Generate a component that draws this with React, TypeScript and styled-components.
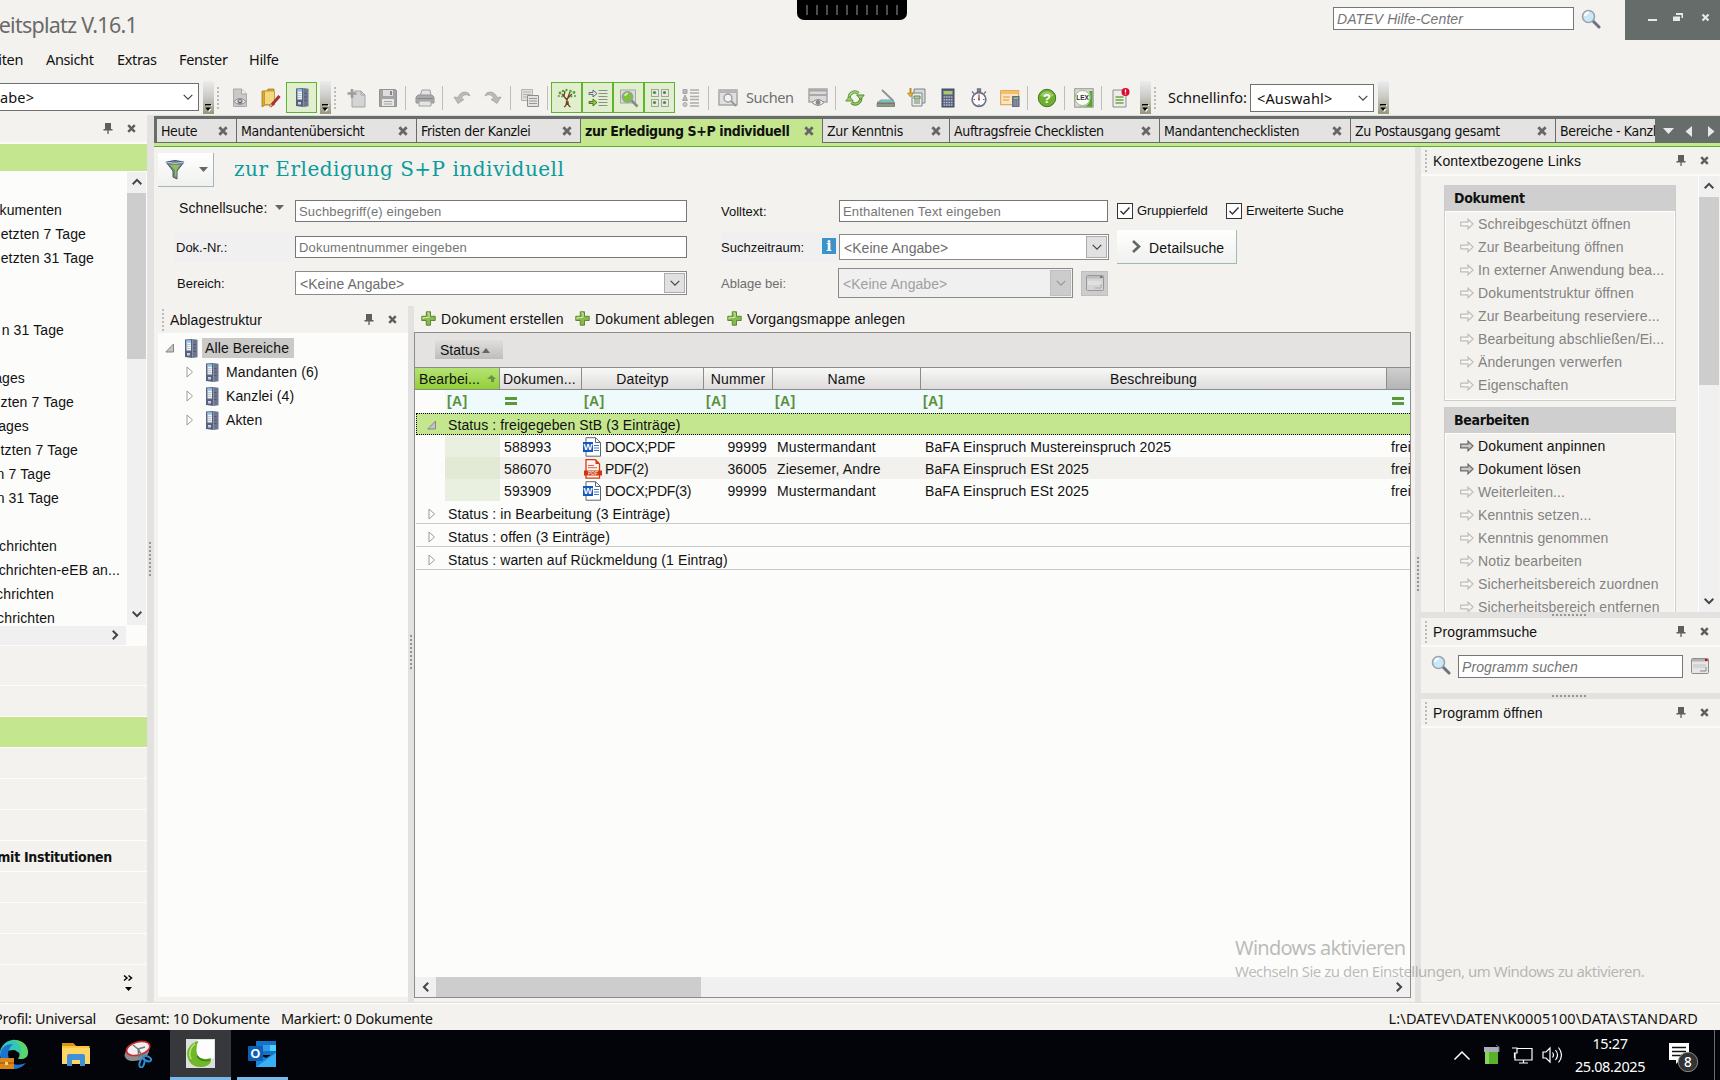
import React from 'react';
import styled, { createGlobalStyle, css } from 'styled-components';

const sans = '"Liberation Sans", Arial, sans-serif';
const segoe = '"Noto Sans", "Open Sans", sans-serif';
const tahoma = '"DejaVu Sans Condensed", "DejaVu Sans", sans-serif';
const BG = '#f3f2ee';
const PAPER = '#fcfcfa';
const GREEN = '#c3e68e';
const SPLIT = '#e3e2e0';

const Global = createGlobalStyle`
  * { box-sizing: border-box; }
  body { margin: 0; overflow: hidden; background: ${BG}; }
  svg { display: block; flex: none; }
`;

const Screen = styled.div`
  position: relative;
  width: 1720px;
  height: 1080px;
  display: flex;
  flex-direction: column;
  overflow: hidden;
  background: ${BG};
  color: #111;
  font: 14px ${sans};
  letter-spacing: 0.12px;
  white-space: nowrap;
`;

/* ---------- title, menu ---------- */
const TitleBar = styled.header`
  height: 40px;
  display: flex;
  align-items: flex-start;
`;
const AppTitle = styled.div`
  width: 137px;
  height: 40px;
  display: flex;
  justify-content: flex-end;
  padding-top: 4px;
  margin-right: 1196px;
  font: 21.5px/42px ${segoe};
  letter-spacing: -0.75px;
  color: #6a6a6a;
`;
const TextField = styled.div<{ $w: number; $h?: number; $italic?: boolean }>`
  width: ${p => p.$w}px;
  height: ${p => p.$h ?? 22}px;
  flex: none;
  display: flex;
  align-items: center;
  padding: 1px 0 0 3px;
  border: 1px solid #767676;
  background: #fff;
  color: #757575;
  font-size: 13px;
  letter-spacing: 0.17px;
  ${p => p.$italic && css`font-size: 14px; font-style: italic; letter-spacing: 0.1px;`}
`;
const HelpSearch = styled.div`
  display: flex;
  align-items: center;
  gap: 7px;
  padding-top: 7px;
  width: 292px;
`;
const WindowButtons = styled.div`
  width: 95px;
  height: 40px;
  background: #666c69;
`;
const RemotePill = styled.div`
  position: absolute;
  left: 797px;
  top: 0;
  width: 110px;
  height: 20px;
  padding: 5px 9px 0;
  display: flex;
  justify-content: space-between;
  background: #000;
  border-radius: 0 0 7px 7px;
`;
const Tick = styled.i`
  width: 2px;
  height: 10px;
  background: #4c4c4c;
`;
const MenuBar = styled.nav`
  height: 40px;
  display: flex;
  align-items: center;
  padding-bottom: 2px;
  font: 14.5px ${segoe};
  letter-spacing: -0.35px;
`;
const MenuItem = styled.span<{ $w: number; $right?: boolean }>`
  width: ${p => p.$w}px;
  display: flex;
  justify-content: ${p => (p.$right ? 'flex-end' : 'flex-start')};
  margin-right: ${p => (p.$right ? 23 : 0)}px;
`;

/* ---------- toolbar ---------- */
const ToolBar = styled.div`
  height: 35px;
  display: flex;
  align-items: center;
  font: 14.5px ${segoe};
`;
const ToolCombo = styled.div<{ $w: number; $open?: boolean; $top: number }>`
  width: ${p => p.$w}px;
  height: 28px;
  flex: none;
  display: flex;
  align-items: center;
  justify-content: space-between;
  padding: 0 5px 1px ${p => (p.$open ? 0 : 6)}px;
  margin-top: ${p => p.$top}px;
  border: 1px solid #707070;
  border-left-width: ${p => (p.$open ? 0 : 1)}px;
  background: #fff;
  letter-spacing: 0.15px;
`;
const Overflow = styled.div<{ $ml: number }>`
  width: 11px;
  height: 33px;
  flex: none;
  margin-left: ${p => p.$ml}px;
  display: flex;
  align-items: flex-end;
  justify-content: center;
  padding-bottom: 2px;
  background: linear-gradient(#ececee, #c9c9c4 50%, #97967b);
`;
const Grip = styled.i<{ $ml?: number; $mr?: number; $h?: number }>`
  width: 2px;
  height: ${p => p.$h ?? 22}px;
  flex: none;
  margin: 0 ${p => p.$mr ?? 0}px 0 ${p => p.$ml ?? 0}px;
  background: repeating-linear-gradient(#bcbcba 0 2px, transparent 2px 4px);
`;
const Slot = styled.div<{ $on?: boolean; $w?: number }>`
  width: ${p => p.$w ?? 31}px;
  height: 31px;
  flex: none;
  display: flex;
  align-items: center;
  justify-content: center;
  ${p => p.$on && css`background: #e1efcf; border: 1px solid #5db42d;`}
`;
const Sep = styled.i`
  width: 1px;
  height: 24px;
  flex: none;
  margin: 0 3px 0 2px;
  background: #bdbdbb;
`;
const ToolText = styled.span<{ $w: number; $c?: string; $ml: number }>`
  width: ${p => p.$w}px;
  margin-left: ${p => p.$ml}px;
  padding-bottom: 1px;
  flex: none;
  color: ${p => p.$c ?? '#111'};
  letter-spacing: ${p => (p.$c ? -0.4 : 0)}px;
`;

/* ---------- body ---------- */
const Body = styled.div`
  height: 888px;
  display: flex;
`;
const NavPane = styled.aside`
  width: 147px;
  flex: none;
  display: flex;
  flex-direction: column;
`;
const PaneHead = styled.div<{ $h: number; $line?: boolean }>`
  height: ${p => p.$h}px;
  flex: none;
  display: flex;
  align-items: center;
  padding-left: 4px;
  border-bottom: ${p => (p.$line ? '2px solid #fbfbfa' : '0')};
`;
const HeadTitle = styled.span`
  flex: 1;
  padding-left: 6px;
`;
const HeadTools = styled.span<{ $mr: number }>`
  display: flex;
  align-items: center;
  gap: 14px;
  margin-right: ${p => p.$mr}px;
`;
const NavGreen = styled.div`
  height: 28px;
  flex: none;
  background: ${GREEN};
  border-bottom: 1px solid ${PAPER};
`;
const NavBody = styled.div`
  height: 453px;
  flex: none;
  display: flex;
  background: ${PAPER};
`;
const NavList = styled.div`
  width: 127px;
  height: 453px;
  overflow: hidden;
  padding-top: 1px;
`;
const NavRow = styled.div<{ $end: number }>`
  width: ${p => p.$end}px;
  height: 24px;
  display: flex;
  align-items: center;
  justify-content: flex-end;
  padding-top: 1px;
`;
const VScroll = styled.div<{ $w: number }>`
  width: ${p => p.$w}px;
  flex: none;
  display: flex;
  flex-direction: column;
  align-items: stretch;
  background: #f0f0f0;
`;
const ScrollBtn = styled.div<{ $h?: number; $w?: number }>`
  height: ${p => p.$h ?? 20}px;
  width: ${p => (p.$w ? `${p.$w}px` : 'auto')};
  flex: none;
  display: flex;
  align-items: center;
  justify-content: center;
  padding-bottom: 1px;
`;
const VThumb = styled.div<{ $h: number }>`
  height: ${p => p.$h}px;
  background: #cdcdcd;
`;
const Spacer = styled.div`
  flex: 1;
`;
const NavHScroll = styled.div`
  height: 21px;
  flex: none;
  width: 147px;
  display: flex;
  justify-content: flex-end;
  padding: 0 21px 1px 0;
  background: linear-gradient(90deg, #f0f0f0 126px, ${PAPER} 126px);
  border: solid ${PAPER};
  border-width: 1px 0;
`;
const NavGroup = styled.div<{ $h: number; $on?: boolean }>`
  height: ${p => p.$h}px;
  flex: none;
  display: flex;
  align-items: center;
  justify-content: flex-end;
  padding: 2px 35px 0 0;
  border-bottom: 1px solid #fdfdfc;
  background: ${p => (p.$on ? GREEN : 'transparent')};
  font: bold 14px ${tahoma};
  letter-spacing: -0.3px;
`;
const NavFoot = styled.div`
  flex: 1;
  display: flex;
  justify-content: flex-end;
  padding: 9px 13px 0 0;
`;
const Splitter = styled.div<{ $w: number; $pt: number }>`
  width: ${p => p.$w}px;
  flex: none;
  padding: ${p => p.$pt}px 0 0 2px;
  background: ${SPLIT};
`;
const SplitDots = styled.i`
  display: block;
  width: 2px;
  height: 35px;
  background: repeating-linear-gradient(#959595 0 2px, transparent 2px 4px);
`;
const HSplitter = styled.div`
  height: 6px;
  flex: none;
  display: flex;
  align-items: center;
  padding-left: 131px;
  background: ${SPLIT};
`;
const HSplitDots = styled.i`
  width: 35px;
  height: 2px;
  background: repeating-linear-gradient(90deg, #959595 0 2px, transparent 2px 4px);
`;
const Work = styled.div`
  flex: 1;
  min-width: 0;
  display: flex;
  flex-direction: column;
`;

/* ---------- tabs ---------- */
const TabStrip = styled.div`
  height: 32px;
  flex: none;
  display: flex;
  padding: 3px 0 0 3px;
  background: #676d6a;
  border-top: 1px solid #dddcd9;
  border-bottom: 1px solid #5ab22b;
  box-shadow: inset 0 -3px 0 #c3e890, inset 0 -4px 0 #676d6a;
`;
const Tab = styled.div<{ $w: number; $on?: boolean; $cut?: boolean }>`
  width: ${p => p.$w}px;
  height: ${p => (p.$on ? 27 : 23)}px;
  flex: none;
  display: flex;
  align-items: flex-start;
  justify-content: space-between;
  padding: 0 ${p => (p.$cut ? 0 : 8)}px 0 4px;
  margin-right: 1px;
  overflow: hidden;
  background: ${p => (p.$on ? GREEN : '#e4e3e1')};
  font: ${p => (p.$on ? 'bold' : 'normal')} 14px/25px ${tahoma};
  letter-spacing: ${p => (p.$on ? -0.38 : -0.35)}px;
  svg { margin-top: 7px; }
`;
const TabNav = styled.div`
  flex: 1;
  display: flex;
  padding: 7px 0 0 7px;
`;

const Columns = styled.div`
  flex: 1;
  min-height: 0;
  display: flex;
`;
const Center = styled.main`
  width: 1261px;
  flex: none;
  display: flex;
  flex-direction: column;
`;
const ViewHead = styled.div`
  height: 46px;
  flex: none;
  display: flex;
  padding: 6px 0 0 4px;
`;
const RaisedButton = styled.button<{ $w: number; $h: number }>`
  width: ${p => p.$w}px;
  height: ${p => p.$h}px;
  flex: none;
  display: flex;
  align-items: center;
  justify-content: space-between;
  padding: 0 5px 0 7px;
  border: 0;
  border-right: 1px solid #9fb9ba;
  border-bottom: 1px solid #9fb9ba;
  background: linear-gradient(#fff, #f0f0ee);
  color: #111;
  font: 14px ${sans};
  letter-spacing: 0.2px;
`;
const ButtonText = styled.span`
  flex: 1;
  padding-top: 2px;
  text-align: left;
`;
const ViewTitle = styled.h1`
  margin: 0 0 0 20px;
  font: 20px/32px "DejaVu Serif", serif;
  letter-spacing: 0.5px;
  color: #0a9c9c;
`;
const Form = styled.div`
  height: 113px;
  flex: none;
  display: grid;
  grid-template-columns: 121px 426px 118px 278px 240px;
  grid-template-rows: 36px 36px 36px;
  align-items: center;
  padding-left: 20px;
`;
const Label = styled.label<{ $shade?: boolean; $dim?: boolean; $pl?: number; $big?: boolean }>`
  height: 30px;
  display: flex;
  align-items: center;
  padding-left: ${p => p.$pl ?? 0}px;
  padding-bottom: ${p => (p.$big ? 7 : 0)}px;
  color: ${p => (p.$dim ? '#6d6d6d' : '#111')};
  background: ${p => (p.$shade ? '#f0f0f0' : 'transparent')};
  font-size: ${p => (p.$big ? 14 : 13)}px;
  letter-spacing: ${p => (p.$big ? 0.1 : 0)}px;
`;
const LabelIcon = styled.span`
  margin: 0 3px 3px auto;
`;
const Combo = styled.div<{ $w: number; $h: number; $disabled?: boolean; $ml?: number }>`
  width: ${p => p.$w}px;
  height: ${p => p.$h}px;
  flex: none;
  display: flex;
  align-items: center;
  justify-content: space-between;
  margin-left: ${p => p.$ml ?? 0}px;
  padding: 1px 1px 1px 4px;
  border: 1px solid #8a8a8a;
  background: ${p => (p.$disabled ? '#f0f0f0' : '#fff')};
  color: ${p => (p.$disabled ? '#a0a0a0' : '#6d6d6d')};
  letter-spacing: 0.05px;
`;
const ComboText = styled.span`
  padding-top: 2px;
`;
const ComboArrow = styled.span<{ $disabled?: boolean }>`
  width: 21px;
  height: 100%;
  display: flex;
  align-items: center;
  justify-content: center;
  padding-bottom: 1px;
  border: 1px solid ${p => (p.$disabled ? '#bfbfbf' : '#adadad')};
  background: ${p => (p.$disabled ? '#cccccc' : '#e1e1e1')};
`;
const FieldRow = styled.div`
  display: flex;
  align-items: center;
`;
const IconButton = styled.span`
  width: 27px;
  height: 25px;
  margin: 0 0 0 8px;
  display: flex;
  align-items: center;
  justify-content: center;
  border: 1px solid #bfbfbf;
  background: #cccccc;
`;
const Check = styled.span<{ $w: number }>`
  width: ${p => p.$w}px;
  display: flex;
  align-items: center;
  gap: 4px;
  padding-bottom: 1px;
  font-size: 13px;
  letter-spacing: -0.08px;
`;
const Box = styled.span`
  width: 16px;
  height: 16px;
  flex: none;
  display: flex;
  align-items: center;
  justify-content: center;
  border: 1px solid #333;
  background: #fff;
`;

/* ---------- tree ---------- */
const Lower = styled.div`
  flex: 1;
  min-height: 0;
  display: flex;
  padding: 0 4px 0 4px;
`;
const TreePane = styled.section`
  width: 250px;
  flex: none;
  display: flex;
  flex-direction: column;
  padding-bottom: 6px;
`;
const TreeBody = styled.div`
  flex: 1;
  padding-top: 3px;
  background: ${PAPER};
`;
const TreeRow = styled.div<{ $level: number }>`
  height: 24px;
  display: flex;
  align-items: center;
  padding-left: ${p => 6 + p.$level * 21}px;
`;
const Twist = styled.span`
  width: 20px;
  padding-left: 1px;
`;
const TreeLabel = styled.span<{ $on?: boolean }>`
  height: 20px;
  line-height: 21px;
  margin-left: 4px;
  padding: 0 5px 0 3px;
  background: ${p => (p.$on ? '#cbcac8' : 'transparent')};
`;

/* ---------- grid ---------- */
const GridPane = styled.section`
  width: 997px;
  flex: none;
  display: flex;
  flex-direction: column;
  padding-bottom: 5px;
`;
const Actions = styled.div`
  height: 26px;
  flex: none;
  display: flex;
  align-items: center;
  padding: 0 0 1px 7px;
`;
const Action = styled.span<{ $w: number }>`
  width: ${p => p.$w}px;
  display: flex;
  align-items: center;
  gap: 5px;
  letter-spacing: 0.12px;
`;
const Grid = styled.div`
  flex: 1;
  min-height: 0;
  display: flex;
  flex-direction: column;
  border: 1px solid #8c8c8c;
  background: ${PAPER};
  overflow: hidden;
`;
const GroupBar = styled.div`
  height: 34px;
  flex: none;
  padding: 7px 0 0 20px;
  background: #e4e3e1;
`;
const GroupChip = styled.div`
  width: 68px;
  height: 19px;
  display: flex;
  align-items: center;
  gap: 2px;
  padding: 1px 0 0 5px;
  letter-spacing: 0;
  background: linear-gradient(#e0dfdd, #bebdbc);
`;
const HeadRow = styled.div`
  height: 23px;
  flex: none;
  display: grid;
  grid-template-columns: 85px 82px 122px 69px 148px 466px 23px;
  border-top: 1px solid #8c8c8c;
  border-bottom: 1px solid #8c8c8c;
`;
const HeadCell = styled.div<{ $kind?: 'sorted' | 'dark'; $left?: boolean }>`
  display: flex;
  align-items: center;
  justify-content: ${p => (p.$kind === 'sorted' ? 'space-between' : p.$left ? 'flex-start' : 'center')};
  padding: 1px 3px 0 ${p => (p.$kind === 'sorted' ? 4 : 3)}px;
  border-right: ${p => (p.$kind === 'dark' ? 0 : 1)}px solid #8c8c8c;
  background: ${p =>
    p.$kind === 'sorted'
      ? 'linear-gradient(#b5e376, #92d035)'
      : p.$kind === 'dark'
      ? 'linear-gradient(#cfcfcf, #b4b4b4)'
      : 'linear-gradient(#f8f8f7, #dddcda)'};
`;
const bodyCols = '30px 55px 82px 122px 69px 148px 466px 24px';
const FilterRow = styled.div`
  height: 23px;
  flex: none;
  display: grid;
  grid-template-columns: ${bodyCols};
  align-items: center;
  padding-bottom: 1px;
  background: linear-gradient(90deg, ${PAPER} 30px, #eefafb 30px);
  color: #5c8f3c;
  font-size: 14px;
  letter-spacing: 0.4px;
`;
const FilterCell = styled.span<{ $eq?: boolean }>`
  padding-left: ${p => (p.$eq ? 5 : 2)}px;
  font-weight: bold;
`;
const GroupRow = styled.div<{ $on?: boolean }>`
  height: ${p => (p.$on ? 22 : 23)}px;
  flex: none;
  display: flex;
  align-items: center;
  margin-left: 1px;
  padding: ${p => (p.$on ? '2px 0 0 10px' : '4px 0 0 12px')};
  background: ${p => (p.$on ? GREEN : 'transparent')};
  border-bottom: 1px solid #cacaca;
  ${p => p.$on && css`border: 1px dotted #000; border-right: 0;`}
`;
const GroupText = styled.span<{ $ml: number }>`
  margin-left: ${p => p.$ml}px;
  letter-spacing: 0.1px;
`;
const Row = styled.div<{ $alt?: boolean }>`
  height: 22px;
  flex: none;
  display: grid;
  grid-template-columns: ${bodyCols};
  align-items: center;
  background: ${p => (p.$alt ? `linear-gradient(90deg, ${PAPER} 30px, #f2f1ed 30px)` : PAPER)};
`;
const Cell = styled.span<{ $right?: boolean; $tint?: string }>`
  height: 22px;
  display: flex;
  align-items: center;
  gap: 4px;
  padding: 2px ${p => (p.$right ? 6 : 0)}px 0 4px;
  justify-content: ${p => (p.$right ? 'flex-end' : 'flex-start')};
  background: ${p => p.$tint ?? 'transparent'};
`;
const FileCell = styled(Cell)`
  padding: 1px 0 0 1px;
  gap: 3px;
  letter-spacing: -0.3px;
`;
const HScroll = styled.div`
  height: 20px;
  flex: none;
  display: flex;
  align-items: stretch;
  background: #f0f0f0;
`;
const HThumb = styled.div`
  width: 265px;
  background: #cdcdcd;
`;

/* ---------- right side ---------- */
const LinksPane = styled.aside`
  width: 299px;
  flex: none;
  display: flex;
  flex-direction: column;
`;
const LinksBody = styled.div`
  height: 436px;
  flex: none;
  display: flex;
  overflow: hidden;
`;
const LinksList = styled.div`
  width: 278px;
  flex: none;
  padding: 9px 22px 0 23px;
  border-right: 1px solid #fff;
`;
const Card = styled.div`
  width: 232px;
  margin-bottom: 6px;
  border: 1px solid #cdcdcd;
`;
const CardHead = styled.div`
  height: 25px;
  padding: 0 0 0 9px;
  background: #cfcfcf;
  font: bold 14px/24px ${tahoma};
  letter-spacing: -0.3px;
`;
const CardItems = styled.div`
  padding: 0 0 3px 14px;
  border: 1px solid #fff;
`;
const LinkItem = styled.div<{ $on?: boolean }>`
  height: 23px;
  display: flex;
  align-items: center;
  gap: 4px;
  padding-top: 1px;
  color: ${p => (p.$on ? '#111' : '#838383')};
`;
const ProgSearch = styled.div`
  height: 46px;
  flex: none;
  display: flex;
  align-items: flex-start;
  gap: 7px;
  padding: 8px 0 0 10px;
`;
const FormIconWrap = styled.span`
  padding: 3px 0 0 1px;
`;

/* ---------- status, taskbar ---------- */
const StatusBar = styled.footer`
  height: 27px;
  flex: none;
  display: flex;
  align-items: center;
  padding-top: 2px;
  border-top: 1px solid #fff;
  box-shadow: 0 -1px 0 #dddcd9;
  font: 14.5px ${segoe};
  letter-spacing: -0.3px;
`;
const StatusText = styled.span<{ $w: number; $right?: boolean; $mr: number; $ls?: number }>`
  width: ${p => p.$w}px;
  margin-right: ${p => p.$mr}px;
  display: flex;
  justify-content: ${p => (p.$right ? 'flex-end' : 'flex-start')};
  letter-spacing: ${p => p.$ls ?? -0.3}px;
`;
const TaskBar = styled.footer`
  height: 50px;
  flex: none;
  display: flex;
  background: #020409;
  color: #fff;
`;
const Task = styled.div<{ $w: number; $ml: number; $on?: boolean; $run?: boolean }>`
  width: ${p => p.$w}px;
  margin-left: ${p => p.$ml}px;
  flex: none;
  display: flex;
  align-items: center;
  justify-content: center;
  background: ${p => (p.$on ? '#37383c' : 'transparent')};
  border-bottom: 3px solid ${p => (p.$run ? '#76b9ed' : 'transparent')};
`;
const Tray = styled.div`
  margin-left: auto;
  display: flex;
  align-items: center;
`;
const Clock = styled.div`
  width: 90px;
  text-align: center;
  font: 14.5px/23px ${segoe};
  letter-spacing: -0.4px;
`;
const ShowDesktop = styled.i`
  width: 6px;
  height: 50px;
  border-left: 1px solid #6b6b6d;
  margin-left: 13px;
`;
const Watermark = styled.div`
  position: absolute;
  left: 1235px;
  top: 934px;
  color: rgba(120, 120, 120, 0.5);
  font: 15px/20px ${segoe};
  letter-spacing: -0.5px;
`;
const WatermarkTitle = styled.div`
  font-size: 20px;
  line-height: 27px;
  letter-spacing: -0.7px;
`;

/* ---------- icons ---------- */
const X = ({ c = '#5f5f5f', s = 9 }: { c?: string; s?: number }) => (
  <svg width={s} height={s} viewBox="0 0 9 9"><path d="M1.200 1.200 7.800 7.800M7.800 1.200 1.200 7.800" stroke={c} strokeWidth="2.500" /></svg>
);
const Pin = () => (
  <svg width="10" height="11" viewBox="0 0 10 11"><path d="M2 0h6v6h1.500v1.500H5.700V11H4.400V7.500H.5V6H2z" fill="#5f5f5f" /></svg>
);
const Chevron = ({ d = 'down', c = '#444', w = 1.2, s = 10 }: { d?: string; c?: string; w?: number; s?: number }) => {
  const paths: Record<string, string> = { down: 'M.7 2.800 5 7.100 9.300 2.800', up: 'M.7 7.200 5 2.900 9.300 7.200', left: 'M7.200.7 2.900 5 7.200 9.300', right: 'M2.800.7 7.100 5 2.800 9.300' };
  return <svg width={s} height={s} viewBox="0 0 10 10"><path d={paths[d]} fill="none" stroke={c} strokeWidth={w} /></svg>;
};
const Tri = ({ d = 'down', c = '#666', w = 9, h = 5 }: { d?: string; c?: string; w?: number; h?: number }) => {
  const paths: Record<string, string> = { down: 'M0 0H10L5 10z', up: 'M0 10H10L5 0z' };
  return <svg width={w} height={h} viewBox="0 0 10 10" preserveAspectRatio="none"><path d={paths[d]} fill={c} /></svg>;
};
const OverflowMark = () => (
  <svg width="7" height="8" viewBox="0 0 7 8"><path d="M1 1h6v1H1zM1.500 5h5L4 8z" fill="#fff" /><path d="M0 0h6v1.500H0zM.2 3.600h5.600L3 7z" fill="#000" /></svg>
);
const Magnifier = () => (
  <svg width="20" height="20" viewBox="0 0 20 20">
    <path d="M12 12l6 6" stroke="#6c7282" strokeWidth="3" strokeLinecap="round" />
    <circle cx="7.500" cy="7.500" r="6" fill="#c9e9fa" stroke="#9ba3ab" strokeWidth="1.600" />
    <path d="M4 7a4 4 0 0 1 4-3.400" stroke="#fff" strokeWidth="2" fill="none" />
  </svg>
);
const Binder = () => (
  <svg width="14" height="19" viewBox="0 0 14 19">
    <path d="M1 .5 8.500 0v19L1 18z" fill="#56617f" /><path d="M8.500 0 13.500.8v17.400L8.500 19z" fill="#6d7690" />
    <path d="M2.500 1.500h4.500v10H2.500z" fill="#edf2f6" /><path d="M2.500 1.500h4.500v2.200H2.500z" fill="#8cc2ea" /><path d="M3 5.500h3.500M3 7.500h3.500M3 9.500h3.500" stroke="#a8b0b8" strokeWidth=".7" />
    <path d="M3 14h3v2.500H3z" fill="#c9d0dc" /><path d="M9.500 5.500h2M9.500 9h2M9.500 12.500h2" stroke="#49536f" />
  </svg>
);
const Plus = () => (
  <svg width="15" height="15" viewBox="0 0 15 15">
    <path d="M5.300.8h4.200v4.500h4.700v4.200H9.500v4.700H5.300V9.500H.8V5.300h4.500z" fill="#8ab84f" stroke="#5b8733" />
    <path d="M6.500 2h1.500v4.600H2V8" stroke="#d2eaaf" fill="none" />
  </svg>
);
const Arrow = ({ on }: { on?: boolean }) => (
  <svg width="14" height="12" viewBox="0 0 14 12">
    <path d="M.7 4.200H8V1.200L13.100 6 8 10.800V7.800H.7z" fill={on ? '#c9c9c9' : '#f7f7f5'} stroke={on ? '#6b6b6b' : '#bdbdbd'} strokeWidth="1.200" />
  </svg>
);
const Open = () => <svg width="10" height="10" viewBox="0 0 10 10"><path d="M8.500 1v8H.8z" fill="#c4c4c4" stroke="#858585" /></svg>;
const Closed = () => <svg width="8" height="12" viewBox="0 0 8 12"><path d="M1 1l5.500 5L1 11z" fill="#fff" stroke="#9a9a9a" /></svg>;
const Chk = () => <svg width="12" height="10" viewBox="0 0 12 10"><path d="M1.500 5l3 3L10.500 1.500" stroke="#333" strokeWidth="1.400" fill="none" /></svg>;
const FormIcon = ({ dim }: { dim?: boolean }) => (
  <svg width="18" height="16" viewBox="0 0 18 16">
    <rect x=".5" y=".5" width="17" height="15" rx="1" fill={dim ? '#d4d4d4' : '#e6e6e6'} stroke={dim ? '#999' : '#8d8d8d'} />
    <path d="M1 1h16v2.500H1z" fill={dim ? '#bdbdbd' : '#b3b3b3'} /><path d="M14 1h2.500v2H14z" fill={dim ? '#777' : '#d0021b'} />
    <path d="M2 6h13v4H2z" fill={dim ? '#e0e0e0' : '#d4d4d4'} /><path d="M9 13h6V9" stroke={dim ? '#aaa' : '#888'} fill="none" />
  </svg>
);
const Word = () => (
  <svg width="19" height="20" viewBox="0 0 19 20">
    <path d="M3 .7h9.500L17.500 5.500V19.200H3z" fill="#fff" stroke="#5b6470" /><path d="M12.500.7v4.800h5" fill="none" stroke="#5b6470" />
    <path d="M11 8.500h5M11 11h5M11 13.500h5" stroke="#3a7bd0" />
    <rect x="0" y="5" width="10" height="10" fill="#1857b8" />
    <text x="5" y="13.300" fontSize="9.500" fontWeight="bold" fill="#fff" textAnchor="middle" fontFamily="Liberation Sans" letterSpacing="0">W</text>
  </svg>
);
const Pdf = () => (
  <svg width="19" height="20" viewBox="0 0 19 20">
    <path d="M3 .7h9.500L16.500 5v14.200H3z" fill="#fdf3f0" stroke="#d63a10" strokeWidth="1.300" /><path d="M12.500.7V5h4z" fill="#d63a10" />
    <path d="M5 6.500h6M5 8.700h9" stroke="#d9603f" /><rect x="1" y="11.500" width="18" height="5" fill="#d0340c" />
    <text x="10" y="15.800" fontSize="5" fontWeight="bold" fill="#f7d5cb" textAnchor="middle" fontFamily="Liberation Sans" letterSpacing="0">PDF</text>
  </svg>
);

const G = '#8f8f8f';
const icons: Record<string, React.ReactNode> = {
  docEye: <><path d="M3.500 1h8l5 5v12.500h-13z" fill="#c9c9c9" stroke="#aaa" /><path d="M11.500 1v5h5" fill="#eee" stroke="#a5a5a5" /><path d="M4 13.500q6-6 12 0-6 6-12 0z" fill="#eee" stroke="#888" /><circle cx="10" cy="13.500" r="2.500" fill="#777" /><circle cx="10" cy="13" r=".9" fill="#eee" /></>,
  folder: <><path d="M1 3h5l1-2h6v16H4l-3 2z" fill="#dba92e" stroke="#a67c1d" strokeWidth=".8" /><path d="M3.500 3h10v14l-10-.5z" fill="#f5d77d" stroke="#bb8f2a" strokeWidth=".8" /><path d="M18.500 8 12 15.500l-3 3" stroke="#a63235" strokeWidth="3" /><path d="M10.500 16.500 8.500 19" stroke="#d8b591" strokeWidth="2" /></>,
  newDoc: <><path d="M7 3h7l4 4v12H5V9" fill="#d4d4d4" stroke="#a5a5a5" /><path d="M14 3v4h4" fill="none" stroke="#a5a5a5" /><path d="M5 1v9M.5 5.500h9" stroke="#9c9c9c" strokeWidth="2.600" /></>,
  save: <><path d="M1.500 1.500h16l1 1v16h-17z" fill="#a3a3a3" stroke="#929292" /><path d="M5 2h10v6H5z" fill="#dedede" /><path d="M12 3h2v4h-2z" fill="#888" /><path d="M4 11h12v7H4z" fill="#e6e6e6" /><path d="M6 13.500h8M6 16h8" stroke="#a5a5a5" /></>,
  print: <><path d="M5 8l2-6h8l1 6" fill="#e3e3e3" stroke="#a0a0a0" /><path d="M1 9l2-2h14l2 2v6H1z" fill="#a9a9a9" stroke="#959595" /><path d="M4 13h12v5H4z" fill="#e4e4e4" stroke="#a0a0a0" /><path d="M2 10.500h16" stroke="#858585" /></>,
  undo: <path d="M6 9.500q2-5.500 7-5.500 4 0 5 4-3-2-5.500-1Q9.500 8 9.500 10.500L12 11.500 6 15.500 2 9z" fill="#bababa" stroke="#a3a3a3" strokeWidth=".8" />,
  redo: <path d="M14 9.500Q12 4 7 4 3 4 2 8q3-2 5.500-1 3 1 3 3.500L8 11.500l6 4L18 9z" fill="#bababa" stroke="#a3a3a3" strokeWidth=".8" />,
  copy: <><path d="M1.500 1.500h11v11h-11z" fill="#dedede" stroke="#b3b3b3" /><path d="M3 4h8M3 6.500h8M3 9h8" stroke="#b3b3b3" /><path d="M7.500 7.500h11v11h-11z" fill="#e2e2e2" stroke={G} /><path d="M9 10.500h8M9 13h8M9 15.500h8" stroke="#999" /></>,
  tree: <><path d="M10 10v7M10 12 5 6M10 11l5-5M10 12l3-8M7 8 8 3M7 19q2.500-1 2.500-5h1.500q0 4 2.500 5" stroke="#6b4426" strokeWidth="1.300" fill="none" /><g fill="#5c9f45"><circle cx="3" cy="5" r="1.400" /><circle cx="6" cy="3" r="1.300" /><circle cx="9.500" cy="2" r="1.200" /><circle cx="13.500" cy="3" r="1.300" /><circle cx="17" cy="4.500" r="1.400" /><circle cx="18" cy="8" r="1.100" /><circle cx="1.800" cy="8" r="1.100" /><circle cx="5" cy="8.500" r=".9" /><circle cx="14.500" cy="8.500" r="1" /></g></>,
  arrows: <><path d="M1 4.500h4V2l4 3.500L5 9V6.500H1z" fill="#dce2e8" stroke="#56606c" strokeWidth=".9" /><path d="M1 13.500h4V11l4 3.500L5 18v-2.500H1z" fill="#8cc63f" stroke="#3f6d1c" strokeWidth=".9" /><path d="M10.500 2.500h9M10.500 5.500h9M10.500 8.500h9M10.500 11.500h9M10.500 14.500h9M10.500 17.500h9" stroke="#8a918c" strokeWidth="1.200" /></>,
  zoom: <><rect x="1.500" y="2" width="15" height="13" fill="#dcdcdc" stroke="#a5a5a5" /><circle cx="8.500" cy="9" r="5.200" fill="#7cc435" stroke="#989da2" strokeWidth="1.500" /><path d="M6 8a3 3 0 0 1 3-2.500" stroke="#d8f3b4" strokeWidth="1.600" fill="none" /><path d="M12.500 12.500 18.500 18.500" stroke="#868b90" strokeWidth="2.600" /></>,
  tiles: <><g fill="#e8e8e6" stroke="#a0a5a1"><rect x="1.500" y="1.500" width="7" height="7" /><rect x="11.500" y="1.500" width="7" height="7" /><rect x="1.500" y="11.500" width="7" height="7" /><rect x="11.500" y="11.500" width="7" height="7" /></g><g fill="#4a9230"><circle cx="4.500" cy="4.500" r="1.600" /><circle cx="14.500" cy="4.500" r="1.600" /><circle cx="4.500" cy="14.500" r="1.600" /><circle cx="14.500" cy="14.500" r="1.600" /></g></>,
  list: <><path d="M2 1.500h4v4H2zM4 7l2.500 5.500h-5z" fill="#b9b9b9" stroke="#a3a3a3" /><circle cx="4" cy="16.500" r="2" fill="#ccc" stroke="#a3a3a3" /><path d="M9 2h9M9 5h9M9 8.500h9M9 11.500h9M9 15h9M9 18h9" stroke="#adadad" strokeWidth="1.600" /></>,
  winSearch: <><rect x="1" y="2" width="18" height="15" fill="#dfdfdf" stroke="#a3a3a3" strokeWidth="1.400" /><path d="M1 2h18v3H1z" fill="#b5b5b5" /><circle cx="10" cy="10" r="4" fill="#f2f2f2" stroke="#999" strokeWidth="1.300" /><path d="M13 13l5 5" stroke="#999" strokeWidth="2" /></>,
  winEye: <><rect x="1" y="1" width="18" height="13" fill="#dadada" stroke="#a3a3a3" strokeWidth="1.400" /><path d="M1 2.500h18M1 7h18" stroke="#a8a8a8" strokeWidth="2" /><path d="M4 14.500q6-6 12 0-6 6-12 0z" fill="#eee" stroke="#888" /><circle cx="10" cy="14.500" r="2.400" fill="#888" /></>,
  refresh: <><path d="M4.500 11a5.500 5.500 0 0 1 9-5.500" stroke="#5d983f" strokeWidth="3.200" fill="none" /><path d="M4.500 11a5.500 5.500 0 0 1 9-5.500" stroke="#b6dd8d" strokeWidth="1.300" fill="none" /><path d="M.8 10h7.500L4.500 14.500z" fill="#9fd067" stroke="#5d983f" transform="rotate(180 4.500 11.500)" /><path d="M15.500 9a5.500 5.500 0 0 1-9 5.500" stroke="#4b8b2a" strokeWidth="3.200" fill="none" /><path d="M15.500 9a5.500 5.500 0 0 1-9 5.500" stroke="#9fd067" strokeWidth="1.300" fill="none" /><path d="M11.700 7h7.500l-3.700 4.500z" fill="#9fd067" stroke="#4b8b2a" /></>,
  scanner: <><path d="M6 2 17.500 13" stroke="#8a9494" strokeWidth="1.800" /><path d="M1 14l4-2.500h10l4 2.500v4H1z" fill="#8a9494" /><path d="M2.500 13.800l3-1.600h10l2.500 1.600z" fill="#6bd2dc" /><path d="M1 15.500h17.500v3H1z" fill="#8f987f" stroke="#6a7360" strokeWidth=".7" /></>,
  import: <><path d="M7 1h11v14H7z" fill="#d7dadb" stroke="#7d8584" /><path d="M5 5h10v13H5z" fill="#eceeee" stroke="#7d8584" /><path d="M7 8h6v3H7zM7 13h6M7 15h6" fill="#b9c7b0" stroke="#688857" /><path d="M3.500 0v6" stroke="#b88f24" strokeWidth="2" /><path d="M.5 5h6l-3 4z" fill="#e0b23c" stroke="#b88f24" strokeWidth=".8" /></>,
  calc: <><rect x="4" y="1" width="12" height="18" fill="#565f7c" stroke="#434b63" /><path d="M5.500 3h9v3.500h-9z" fill="#a8c76e" /><path d="M5.500 9h9M5.500 11.700h9M5.500 14.400h9M5.500 17h9" stroke="#b4bacb" strokeWidth="1.500" strokeDasharray="1.700 .75" /></>,
  watch: <><circle cx="10" cy="11.500" r="6.900" fill="#fbfbfd" stroke="#6b7085" strokeWidth="1.600" /><path d="M10 11.500V6.500" stroke="#c33" strokeWidth="1.300" /><circle cx="10" cy="11.500" r="1" fill="#555" /><path d="M8.500 1h3v2.500h-3zM3 3.500l2 2M17 3.500l-2 2" stroke="#6b7085" strokeWidth="1.300" fill="#999" /><path d="M10 16v1.500M4.500 11.500H6M14 11.500h1.500" stroke="#666" /></>,
  card: <><rect x=".7" y="2.700" width="18" height="14" fill="#fae5c0" stroke="#dc9a42" /><path d="M1 3h17.500v3H1z" fill="#f4bf6c" /><path d="M3 9h7M3 12h6" stroke="#e6b06a" strokeWidth="1.300" /><rect x="12" y="8" width="7.500" height="11" fill="#626b87" /><path d="M13.500 9.500h4.500v1.700h-4.500z" fill="#a8c76e" /><path d="M13.500 13h5M13.500 15h5M13.500 17h5" stroke="#c6cad6" strokeDasharray="1 .8" /></>,
  help: <><circle cx="10" cy="10" r="8.700" fill="#6fae31" stroke="#3f7a1c" /><path d="M3.500 8a6.700 6 0 0 1 13 0q-6.500 2-13 0z" fill="#a5d272" opacity=".8" /><text x="10" y="14.800" fontSize="13" fontWeight="bold" fill="#fff" textAnchor="middle" fontFamily="Liberation Sans">?</text></>,
  lex: <><rect x=".7" y=".7" width="18.500" height="18.500" fill="#d8d8d6" stroke="#9a9a9a" /><path d="M4 18q8 2 11-3 3-6 0-12h3.500v16z" fill="#5aa52c" /><circle cx="8.500" cy="10" r="7.500" fill="#fdfdfd" stroke="#7ab850" strokeWidth=".8" /><text x="8.500" y="12.400" fontSize="6.500" fontWeight="bold" fill="#333" textAnchor="middle" fontFamily="Liberation Sans" letterSpacing="0">LEX</text></>,
  alert: <><path d="M2 2h13v17H2z" fill="#ececec" stroke="#8d8d8d" /><path d="M4.500 9h8M4.500 12h8M4.500 15h8" stroke="#6da63f" strokeWidth="1.500" /><circle cx="14.500" cy="4" r="4" fill="#d90a2c" /><path d="M14.500 1.500v3M14.500 5.400v1" stroke="#fff" strokeWidth="1.300" /></>,
};
const Icon = ({ n }: { n: string }) => <svg width="20" height="20" viewBox="0 0 20 20">{icons[n]}</svg>;
const Tool = ({ n, on }: { n: string; on?: boolean }) => (
  <Slot $on={on}>{n === 'binder' ? <Binder /> : <Icon n={n} />}</Slot>
);

const HeadControls = ({ mr = 11 }: { mr?: number }) => <HeadTools $mr={mr}><Pin /><X s={9} /></HeadTools>;

/* ---------- data ---------- */
const navRows: [string, number][] = [
  ['', 10], ['kumenten', 62], ['etzten 7 Tage', 86], ['etzten 31 Tage', 94], ['', 10], ['', 10], ['n 31 Tage', 64], ['', 10],
  ['ages', 25], ['zten 7 Tage', 74], ['ages', 29], ['tzten 7 Tage', 78], ['n 7 Tage', 51], ['n 31 Tage', 59], ['', 10],
  ['chrichten', 57], ['chrichten-eEB an...', 120], ['chrichten', 54], ['chrichten', 55],
];
const tabs: [string, number][] = [
  ['Heute', 79], ['Mandantenübersicht', 179], ['Fristen der Kanzlei', 163], ['zur Erledigung S+P individuell', 241], ['Zur Kenntnis', 126],
  ['Auftragsfreie Checklisten', 209], ['Mandantenchecklisten', 190], ['Zu Postausgang gesamt', 204], ['Bereiche - Kanzl', 99],
];
const docLinks = ['Schreibgeschützt öffnen', 'Zur Bearbeitung öffnen', 'In externer Anwendung bea...', 'Dokumentstruktur öffnen', 'Zur Bearbeitung reserviere...', 'Bearbeitung abschließen/Ei...', 'Änderungen verwerfen', 'Eigenschaften'];
const editLinks = ['Dokument anpinnen', 'Dokument lösen', 'Weiterleiten...', 'Kenntnis setzen...', 'Kenntnis genommen', 'Notiz bearbeiten', 'Sicherheitsbereich zuordnen', 'Sicherheitsbereich entfernen'];
const docs = [
  ['588993', 'w', 'DOCX;PDF', '99999', 'Mustermandant', 'BaFA Einspruch Mustereinspruch 2025'],
  ['586070', 'p', 'PDF(2)', '36005', 'Ziesemer, Andre', 'BaFA Einspruch ESt 2025'],
  ['593909', 'w', 'DOCX;PDF(3)', '99999', 'Mustermandant', 'BaFA Einspruch ESt 2025'],
];

const Toolbar = () => (
  <ToolBar>
    <ToolCombo $w={199} $open $top={-1}><span>abe&gt;</span><Chevron /></ToolCombo>
    <Overflow $ml={4}><OverflowMark /></Overflow>
    <Grip $ml={3} $mr={5} />
    <Tool n="docEye" /><Tool n="folder" /><Tool n="binder" on />
    <Overflow $ml={3}><OverflowMark /></Overflow>
    <Grip $ml={3} $mr={5} />
    <Tool n="newDoc" /><Tool n="save" /><Sep /><Tool n="print" /><Sep /><Tool n="undo" /><Tool n="redo" /><Sep /><Tool n="copy" /><Sep />
    <Tool n="tree" on /><Tool n="arrows" on /><Tool n="zoom" on /><Tool n="tiles" on /><Tool n="list" /><Sep />
    <Tool n="winSearch" /><ToolText $w={56} $ml={3} $c="#707070">Suchen</ToolText><Tool n="winEye" /><Sep />
    <Tool n="refresh" /><Tool n="scanner" /><Tool n="import" /><Tool n="calc" /><Tool n="watch" /><Tool n="card" /><Sep />
    <Tool n="help" /><Sep /><Tool n="lex" /><Sep /><Tool n="alert" />
    <Overflow $ml={4}><OverflowMark /></Overflow>
    <Grip $ml={3} $mr={0} />
    <ToolText $w={82} $ml={12}>Schnellinfo:</ToolText>
    <ToolCombo $w={124} $top={1}><span>&lt;Auswahl&gt;</span><Chevron /></ToolCombo>
    <Overflow $ml={4}><OverflowMark /></Overflow>
  </ToolBar>
);

const Navigation = () => (
  <NavPane>
    <PaneHead $h={29} $line><HeadTitle /><HeadControls mr={11} /></PaneHead>
    <NavGreen />
    <NavBody>
      <NavList>{navRows.map(([t, e], i) => <NavRow key={i} $end={e}>{t}</NavRow>)}</NavList>
      <VScroll $w={19}><ScrollBtn $h={21}><Chevron d="up" w={2} /></ScrollBtn><VThumb $h={166} /><Spacer /><ScrollBtn $h={22}><Chevron w={2} /></ScrollBtn></VScroll>
    </NavBody>
    <NavHScroll><ScrollBtn $h={18} $w={22}><Chevron d="right" w={2} /></ScrollBtn></NavHScroll>
    <NavGroup $h={40} /><NavGroup $h={31} /><NavGroup $h={31} $on /><NavGroup $h={31} /><NavGroup $h={31} /><NavGroup $h={31} />
    <NavGroup $h={31}>mit Institutionen</NavGroup><NavGroup $h={31} /><NavGroup $h={31} /><NavGroup $h={31} />
    <NavFoot>
      <svg width="11" height="18" viewBox="0 0 11 18"><path d="M1 1.500 4 4 1 6.500M5.500 1.500l3 2.500-3 2.500" stroke="#000" strokeWidth="1.500" fill="none" /><path d="M2 13h7L5.500 17z" /></svg>
    </NavFoot>
  </NavPane>
);

const SearchForm = () => (
  <Form>
    <Label $big $pl={5}>Schnellsuche:<LabelIcon><svg width="20" height="12"><path d="M3 5h9l-4.500 5z" fill="#666" /></svg></LabelIcon></Label>
    <TextField $w={392}>Suchbegriff(e) eingeben</TextField>
    <Label>Volltext:</Label>
    <TextField $w={269}>Enthaltenen Text eingeben</TextField>
    <FieldRow>
      <Check $w={109}><Box><Chk /></Box>Gruppierfeld</Check>
      <Check $w={125}><Box><Chk /></Box>Erweiterte Suche</Check>
    </FieldRow>
    <Label $shade $pl={2}>Dok.-Nr.:</Label>
    <TextField $w={392}>Dokumentnummer eingeben</TextField>
    <Label $shade>Suchzeitraum:
      <LabelIcon><svg width="14" height="16"><rect width="14" height="16" fill="#3c93cb" /><text x="7" y="13" fontSize="14" fontWeight="bold" fill="#fff" textAnchor="middle" fontFamily="DejaVu Serif">i</text></svg></LabelIcon>
    </Label>
    <Combo $w={270} $h={26}><ComboText>&lt;Keine Angabe&gt;</ComboText><ComboArrow><Chevron /></ComboArrow></Combo>
    <RaisedButton $w={120} $h={34}>
      <svg width="25" height="16" viewBox="0 0 25 16"><path d="M9 2l6 5.500L9 13" stroke="#666" strokeWidth="2.600" fill="none" /></svg>
      <ButtonText>Detailsuche</ButtonText>
    </RaisedButton>
    <Label $pl={3}>Bereich:</Label>
    <Combo $w={392} $h={24}><ComboText>&lt;Keine Angabe&gt;</ComboText><ComboArrow><Chevron /></ComboArrow></Combo>
    <Label $dim>Ablage bei:</Label>
    <FieldRow>
      <Combo $w={235} $h={30} $ml={-1} $disabled><ComboText>&lt;Keine Angabe&gt;</ComboText><ComboArrow $disabled><Chevron c="#999" /></ComboArrow></Combo>
      <IconButton><FormIcon dim /></IconButton>
    </FieldRow>
    <span />
  </Form>
);

const A = () => <FilterCell>[A]</FilterCell>;
const Eq = () => <FilterCell $eq><svg width="12" height="8"><path d="M0 0h12v3H0zM0 5h12v3H0z" fill="#5c9a37" /></svg></FilterCell>;

const DocumentGrid = () => (
  <GridPane>
    <Actions>
      <Action $w={154}><Plus />Dokument erstellen</Action>
      <Action $w={152}><Plus />Dokument ablegen</Action>
      <Action $w={200}><Plus />Vorgangsmappe anlegen</Action>
    </Actions>
    <Grid>
      <GroupBar><GroupChip>Status<Tri d="up" w={8} h={5} /></GroupChip></GroupBar>
      <HeadRow>
        <HeadCell $kind="sorted">Bearbei...<svg width="9" height="9"><path d="M4.500 0 9 4H7v3H4V4H0z" fill="#6e8f4a" /></svg></HeadCell>
        <HeadCell $left>Dokumen...</HeadCell><HeadCell>Dateityp</HeadCell><HeadCell>Nummer</HeadCell><HeadCell>Name</HeadCell><HeadCell>Beschreibung</HeadCell><HeadCell $kind="dark" />
      </HeadRow>
      <FilterRow><span /><A /><Eq /><A /><A /><A /><A /><Eq /></FilterRow>
      <GroupRow $on><Open /><GroupText $ml={11}>Status : freigegeben StB (3 Einträge)</GroupText></GroupRow>
      {docs.map((d, i) => (
        <Row key={d[0]} $alt={i === 1}>
          <span /><Cell $tint={i === 1 ? '#e2e9d5' : '#e9f0df'} /><Cell>{d[0]}</Cell>
          <FileCell>{d[1] === 'w' ? <Word /> : <Pdf />}{d[2]}</FileCell>
          <Cell $right>{d[3]}</Cell><Cell>{d[4]}</Cell><Cell>{d[5]}</Cell><Cell>frei</Cell>
        </Row>
      ))}
      <GroupRow><Closed /><GroupText $ml={12}>Status : in Bearbeitung (3 Einträge)</GroupText></GroupRow>
      <GroupRow><Closed /><GroupText $ml={12}>Status : offen (3 Einträge)</GroupText></GroupRow>
      <GroupRow><Closed /><GroupText $ml={12}>Status : warten auf Rückmeldung (1 Eintrag)</GroupText></GroupRow>
      <Spacer />
      <HScroll><ScrollBtn $w={21}><Chevron d="left" w={2} /></ScrollBtn><HThumb /><Spacer /><ScrollBtn $w={22}><Chevron d="right" w={2} /></ScrollBtn></HScroll>
    </Grid>
  </GridPane>
);

const SidePanels = () => (
  <LinksPane>
    <PaneHead $h={29} $line><Grip /><HeadTitle>Kontextbezogene Links</HeadTitle><HeadControls /></PaneHead>
    <LinksBody>
      <LinksList>
        <Card><CardHead>Dokument</CardHead><CardItems>{docLinks.map(t => <LinkItem key={t}><Arrow />{t}</LinkItem>)}</CardItems></Card>
        <Card><CardHead>Bearbeiten</CardHead><CardItems>{editLinks.map((t, i) => <LinkItem key={t} $on={i < 2}><Arrow on={i < 2} />{t}</LinkItem>)}</CardItems></Card>
      </LinksList>
      <VScroll $w={20}><ScrollBtn $h={21}><Chevron d="up" w={2} /></ScrollBtn><VThumb $h={188} /><Spacer /><ScrollBtn $h={22}><Chevron w={2} /></ScrollBtn></VScroll>
    </LinksBody>
    <HSplitter><HSplitDots /></HSplitter>
    <PaneHead $h={29} $line><Grip /><HeadTitle>Programmsuche</HeadTitle><HeadControls /></PaneHead>
    <ProgSearch><Magnifier /><TextField $w={225} $h={23} $italic>Programm suchen</TextField><FormIconWrap><FormIcon /></FormIconWrap></ProgSearch>
    <HSplitter><HSplitDots /></HSplitter>
    <PaneHead $h={29} $line><Grip /><HeadTitle>Programm öffnen</HeadTitle><HeadControls /></PaneHead>
  </LinksPane>
);

const Taskbar = () => (
  <TaskBar>
    <Task $w={45} $ml={-9}>
      <svg width="30" height="30" viewBox="0 0 30 30"><path d="M1 17A14 14 0 0 1 29 13q0 7-7 7-5 0-4-4 1-5-4-5-8 0-13 6z" fill="#36c6b4" /><path d="M14 1q14 0 15 12 0 7-7 7-3 0-4-2 7-4 3-11Q18 2 14 1z" fill="#5bd56b" /><path d="M1 17Q2 5 14 5q-7 6-4 15 4 9 17 4-5 6-13 6Q3 29 1 17z" fill="#1b74d1" /><circle cx="17" cy="16" r="3.500" fill="#020409" /><rect x="0" y="19" width="15" height="11" fill="#d9861f" /><path d="M0 24h15" stroke="#8d4c0a" /><rect x="6" y="23" width="3" height="3" fill="#ffd36a" /></svg>
    </Task>
    <Task $w={60} $ml={10}>
      <svg width="28" height="24" viewBox="0 0 28 24"><path d="M0 1h11l3 3h13.500v18H0z" fill="#f9c642" /><path d="M0 1h11l3 3H0z" fill="#d99312" /><path d="M0 6h28v16H0z" fill="#ffd664" /><path d="M5 24V14q0-2 2-2h14q2 0 2 2v10h-5v-6h-8v6z" fill="#3c91d8" /></svg>
    </Task>
    <Task $w={60} $ml={2}>
      <svg width="28" height="28" viewBox="0 0 28 28"><ellipse cx="12.500" cy="13" rx="12.500" ry="7.500" transform="rotate(-16 13 12)" fill="#8b8b8b" /><ellipse cx="14" cy="8.500" rx="12" ry="6.500" transform="rotate(-16 14 8)" fill="#f0f0f0" stroke="#c62b33" strokeWidth="1.600" /><path d="M14 9 9 5M14 9l7-2M14 9l1 9M14 9l5 8" stroke="#777" strokeWidth="1.500" /><g fill="none" stroke="#2a8fd6" strokeWidth="2"><ellipse cx="18" cy="23" rx="2.300" ry="4.500" transform="rotate(15 18 23)" /><ellipse cx="23.500" cy="18.500" rx="4" ry="2.300" transform="rotate(25 23 18)" /></g></svg>
    </Task>
    <Task $w={61} $ml={2} $on $run>
      <svg width="29" height="29" viewBox="0 0 29 29"><rect width="29" height="29" fill="#dededc" /><path d="M11 1h17v18l-6 3q-10 0-11-8z" fill="#fdfdfd" /><path d="M12.500 2Q9 9 11 15q3 7 14 4 1 6-6 8.500Q8 30 3 22-2 12 6 5q4-3 6.500-3z" fill="#6fb82a" /><path d="M9 4.500Q1 12 5 20" stroke="#b7e37a" strokeWidth="1.600" fill="none" /><path d="M11 17q4 6 13 4" stroke="#3f8417" strokeWidth="1.500" fill="none" /></svg>
    </Task>
    <Task $w={51} $ml={6} $run>
      <svg width="29" height="28" viewBox="0 0 29 28"><path d="M8 1h20v14H8z" fill="#1572c6" /><path d="M15 5h7v6h-7z" fill="#2f9be8" /><path d="M22 5h6v6h-6z" fill="#50d0f5" /><path d="M8 13l10 5 10-6v15H8z" fill="#1a86dc" /><path d="M8 27 28 13v14z" fill="#3ab0f2" /><rect y="6" width="15" height="15" rx="1" fill="#0d5fb5" /><text x="7.500" y="18" fontSize="12.500" fontWeight="bold" fill="#fff" textAnchor="middle" fontFamily="Liberation Sans">O</text></svg>
    </Task>
    <Tray>
      <svg width="18" height="11" viewBox="0 0 18 11"><path d="M1.500 9.500 9 2l7.500 7.500" stroke="#fff" strokeWidth="1.500" fill="none" /></svg>
      <svg width="38" height="22" viewBox="0 0 38 22"><path d="M13 3h15v5H13z" fill="#a9aebd" /><path d="M14 8h13v12H14z" fill="#58b32b" /><path d="M14 8h4v12h-4z" fill="#8bd25c" /><path d="M25 1l3 2v5" stroke="#777" fill="none" /></svg>
      <svg width="28" height="20" viewBox="0 0 28 20"><path d="M6 3.500h17v11.500H6zM14.500 15v3M10 18h9" stroke="#fff" fill="none" strokeWidth="1.200" /><path d="M3 3h5v5H5.500v5" stroke="#fff" strokeWidth="1.200" fill="#020409" /></svg>
      <svg width="28" height="20" viewBox="0 0 26 20"><path d="M5 7h3l4-4v14l-4-4H5z" stroke="#fff" fill="none" strokeWidth="1.200" /><path d="M14.500 7.500q2 2.500 0 5M17.500 5q4 5 0 10M20.500 2.500q6 7.500 0 15" stroke="#fff" fill="none" strokeWidth="1.200" /></svg>
      <Clock>15:27<br />25.08.2025</Clock>
      <svg width="46" height="34" viewBox="0 0 46 34"><path d="M14 5h20v17h-9l-4 4v-4h-7z" fill="#fff" /><path d="M17 9.500h14M17 13.500h14M17 17.500h10" stroke="#111" strokeWidth="1.300" /><circle cx="33" cy="24" r="9.700" fill="#333" stroke="#888" /><text x="33" y="28.700" fontSize="13.500" fontWeight="500" fill="#fff" textAnchor="middle" fontFamily="Noto Sans">8</text></svg>
      <ShowDesktop />
    </Tray>
  </TaskBar>
);

export default function App() {
  return (
    <Screen>
      <Global />
      <TitleBar>
        <AppTitle>eitsplatz V.16.1</AppTitle>
        <HelpSearch><TextField $w={241} $h={23} $italic>DATEV Hilfe-Center</TextField><Magnifier /></HelpSearch>
        <WindowButtons>
          <svg width="95" height="40" viewBox="0 0 95 40"><path d="M23 19h9v2h-9z" fill="#e8e8e8" /><path d="M51 13h7v5h-1.500v-3H51z" fill="#e8e8e8" /><path d="M48 16.500h7v4.500h-7z" fill="#e8e8e8" /><path d="M77.500 14.500l6 6M83.500 14.500l-6 6" stroke="#e8e8e8" strokeWidth="2.200" /></svg>
        </WindowButtons>
      </TitleBar>
      <MenuBar>
        <MenuItem $w={23} $right>iten</MenuItem><MenuItem $w={71}>Ansicht</MenuItem><MenuItem $w={62}>Extras</MenuItem><MenuItem $w={70}>Fenster</MenuItem><MenuItem $w={60}>Hilfe</MenuItem>
      </MenuBar>
      <Toolbar />
      <Body>
        <Navigation />
        <Splitter $w={7} $pt={427}><SplitDots /></Splitter>
        <Work>
          <TabStrip>
            {tabs.map(([t, w], i) => <Tab key={t} $w={w} $on={i === 3} $cut={i === 8}>{t}{i < 8 && <X s={10} c="#666" />}</Tab>)}
            <TabNav><svg width="54" height="12" viewBox="0 0 54 12"><path d="M0 2h11L5.500 8zM29 0v11L22.500 5.500zM45 0v11l6.500-5.500z" fill="#e9e9e9" /></svg></TabNav>
          </TabStrip>
          <Columns>
            <Center>
              <ViewHead>
                <RaisedButton $w={56} $h={34}>
                  <svg width="20" height="22" viewBox="0 0 20 22"><path d="M1 3q9-3 18 0l-7 9v8l-4-2v-6z" fill="#74839b" stroke="#4b586e" /><path d="M5 6h10l-3.500 5v7L10 17v-6z" fill="#8ec63f" /><path d="M1 3q9 3 18 0" fill="none" stroke="#c2ccd8" /></svg>
                  <Tri />
                </RaisedButton>
                <ViewTitle>zur Erledigung S+P individuell</ViewTitle>
              </ViewHead>
              <SearchForm />
              <Lower>
                <TreePane>
                  <PaneHead $h={27}><Grip /><HeadTitle>Ablagestruktur</HeadTitle><HeadControls /></PaneHead>
                  <TreeBody>
                    <TreeRow $level={0}><Twist><Open /></Twist><Binder /><TreeLabel $on>Alle Bereiche</TreeLabel></TreeRow>
                    {['Mandanten (6)', 'Kanzlei (4)', 'Akten'].map(t => <TreeRow key={t} $level={1}><Twist><Closed /></Twist><Binder /><TreeLabel>{t}</TreeLabel></TreeRow>)}
                  </TreeBody>
                </TreePane>
                <Splitter $w={6} $pt={329}><SplitDots /></Splitter>
                <DocumentGrid />
              </Lower>
            </Center>
            <Splitter $w={6} $pt={410}><SplitDots /></Splitter>
            <SidePanels />
          </Columns>
        </Work>
      </Body>
      <StatusBar>
        <StatusText $w={96} $right $mr={19}>Profil: Universal</StatusText>
        <StatusText $w={153} $mr={13}>Gesamt: 10 Dokumente</StatusText>
        <StatusText $w={160} $mr={0}>Markiert: 0 Dokumente</StatusText>
        <Spacer />
        <StatusText $w={400} $right $mr={22} $ls={0.15}>L:\DATEV\DATEN\K0005100\DATA\STANDARD</StatusText>
      </StatusBar>
      <Taskbar />
      <RemotePill>{Array.from({ length: 10 }, (_, i) => <Tick key={i} />)}</RemotePill>
      <Watermark><WatermarkTitle>Windows aktivieren</WatermarkTitle>Wechseln Sie zu den Einstellungen, um Windows zu aktivieren.</Watermark>
    </Screen>
  );
}
